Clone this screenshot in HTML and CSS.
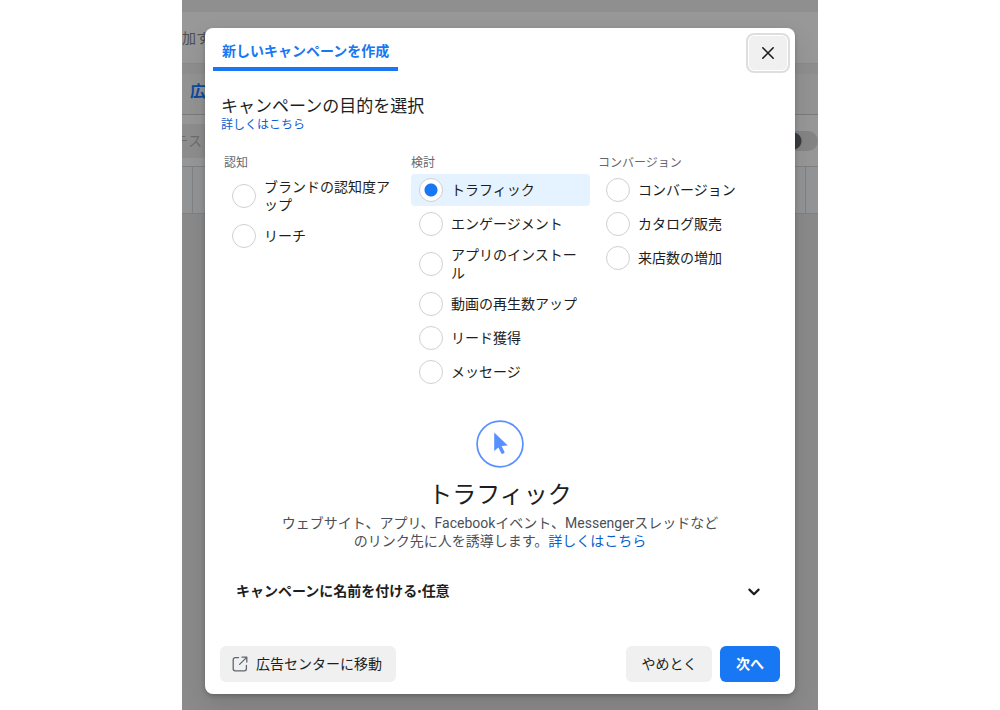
FILE: index.html
```
<!DOCTYPE html>
<html lang="ja">
  <head>
    <meta charset="UTF-8" />
    <meta name="viewport" content="width=device-width, initial-scale=1.0" />
    <title>新しいキャンペーンを作成</title>
    <link rel="stylesheet" href="styles.css">
  </head>
  <body>
    <div class="stage">
      <!-- Ads manager behind the dialog -->
      <div class="backdrop" aria-hidden="true">
        <div class="bg-top"></div>
        <div class="bg-notice">加す</div>
        <div class="bg-gap"></div>
        <div class="bg-tabs">広</div>
        <div class="bg-toolbar">
          <span class="bg-search">テス</span>
          <span class="bg-switch"></span>
        </div>
        <div class="bg-table-head"><span class="bg-cell"></span><span class="bg-cell-last"></span></div>
      </div>

      <!-- Dialog -->
      <div class="overlay">
        <form class="modal" role="dialog" aria-labelledby="tab-title">
          <div class="modal-header">
            <div class="tab" id="tab-title">新しいキャンペーンを作成</div>
            <button class="close-btn" type="button" aria-label="閉じる">
              <svg width="14" height="14" viewBox="0 0 14 14" fill="none" stroke="#1c1e21" stroke-width="1.6" stroke-linecap="round">
                <path d="M1.8 1.8l10.4 10.4M12.2 1.8L1.8 12.2" />
              </svg>
            </button>
          </div>

          <div class="modal-body">
            <h1>キャンペーンの目的を選択</h1>
            <a class="more-link" href="#">詳しくはこちら</a>

            <div class="objectives">
              <div class="column">
                <h2>認知</h2>
                <label class="option"><input type="radio" name="objective" /><span>ブランドの認知度アップ</span></label>
                <label class="option"><input type="radio" name="objective" /><span>リーチ</span></label>
              </div>
              <div class="column">
                <h2>検討</h2>
                <label class="option"><input type="radio" name="objective" checked /><span>トラフィック</span></label>
                <label class="option"><input type="radio" name="objective" /><span>エンゲージメント</span></label>
                <label class="option"><input type="radio" name="objective" /><span>アプリのインストール</span></label>
                <label class="option"><input type="radio" name="objective" /><span>動画の再生数アップ</span></label>
                <label class="option"><input type="radio" name="objective" /><span>リード獲得</span></label>
                <label class="option"><input type="radio" name="objective" /><span>メッセージ</span></label>
              </div>
              <div class="column">
                <h2>コンバージョン</h2>
                <label class="option"><input type="radio" name="objective" /><span>コンバージョン</span></label>
                <label class="option"><input type="radio" name="objective" /><span>カタログ販売</span></label>
                <label class="option"><input type="radio" name="objective" /><span>来店数の増加</span></label>
              </div>
            </div>

            <div class="summary">
              <svg width="48" height="48" viewBox="0 0 48 48">
                <circle cx="24" cy="24" r="22.9" fill="none" stroke="#5890ff" stroke-width="1.7" />
                <path d="M18.2 12.6V31l4.2-3.6 2.8 5.8c.3.7.9.9 1.5.6l1.2-.5c.6-.3.8-.9.5-1.5l-2.8-5.9 6.2-.4z" fill="#5890ff" />
              </svg>
              <h3>トラフィック</h3>
              <p>ウェブサイト、アプリ、Facebookイベント、Messengerスレッドなどのリンク先に人を誘導します。<a href="#">詳しくはこちら</a></p>
            </div>

            <button class="name-toggle" type="button" aria-expanded="false">
              <span>キャンペーンに名前を付ける<span class="dot">•</span>任意</span>
              <svg width="14" height="10" viewBox="0 0 14 10" fill="none" stroke="#1c1e21" stroke-width="2.2" stroke-linecap="round" stroke-linejoin="round">
                <path d="M2.4 2.6L7 7.2l4.6-4.6" />
              </svg>
            </button>
          </div>

          <div class="modal-footer">
            <button class="btn btn-link" type="button">
              <svg width="16" height="16" viewBox="0 0 16 16" fill="none" stroke="#606770" stroke-width="1.3" stroke-linecap="round" stroke-linejoin="round">
                <path d="M6.6 1.6H3.2A2 2 0 0 0 1.2 3.6v9.2a2 2 0 0 0 2 2h9.2a2 2 0 0 0 2-2V9.4M10 1.2h4.8V6M14.4 1.6L7.6 8.4" />
              </svg>
              広告センターに移動
            </button>
            <button class="btn btn-cancel" type="button">やめとく</button>
            <button class="btn btn-primary" type="submit">次へ</button>
          </div>
        </form>
      </div>
    </div>
  </body>
</html>
```
FILE: styles.css
```
/* Global Styles */
* {
  margin: 0;
  padding: 0;
  box-sizing: border-box;
}

body {
  background-color: #fff;
  color: #1c1e21;
  font-family: Roboto, "Noto Sans CJK JP", sans-serif;
  font-size: 14px;
  line-height: 18px;
}

button {
  font: inherit;
  color: inherit;
  border: none;
  cursor: pointer;
}

a {
  color: #0a5fd0;
  text-decoration: none;
}

a:hover {
  text-decoration: underline;
}

.stage {
  display: grid;
  max-width: 636px;
  min-height: 100vh;
  margin: 0 auto;
  overflow: hidden;
}

.backdrop,
.overlay {
  grid-area: 1 / 1;
}

/* Dimmed page */
.backdrop {
  background-color: #8a8b8a;
  color: #4c4e50;
}

.bg-top {
  height: 12px;
  background-color: #8f8f8f;
}

.bg-notice {
  height: 52px;
  line-height: 52px;
  background-color: #989898;
  border-bottom: 1px solid #8b8b8b;
}

.bg-gap {
  height: 10px;
  background-color: #8f8f8f;
}

.bg-tabs {
  height: 41px;
  padding-left: 8px;
  line-height: 36px;
  font-size: 16px;
  font-weight: 700;
  color: #0f4a9e;
  background-color: #949494;
  border-bottom: 1px solid #7c7c7c;
}

.bg-toolbar {
  display: flex;
  justify-content: space-between;
  align-items: center;
  height: 52px;
  background-color: #989898;
  border-bottom: 1px solid #808284;
}

.bg-search {
  width: 120px;
  height: 34px;
  line-height: 34px;
  text-indent: -8px;
  color: #6c6e70;
  background-color: #8e8e8e;
}

.bg-switch {
  width: 36px;
  height: 20px;
  border-radius: 10px;
  background: radial-gradient(circle at 11px 10px, #3a3e44 8px, #858585 9px);
}

.bg-table-head {
  display: flex;
  justify-content: space-between;
  height: 47px;
  background-color: #939597;
  border-bottom: 1px solid #808284;
}

.bg-cell {
  width: 11px;
  border-right: 1px solid #808284;
}

.bg-cell-last {
  width: 13px;
  border-left: 1px solid #808284;
}

/* Modal */
.overlay {
  display: flex;
  align-items: flex-start;
  padding: 28px 23px 17px;
}

.modal {
  width: 100%;
  background-color: #fff;
  border-radius: 8px;
  box-shadow: 0 12px 28px rgba(0, 0, 0, 0.12), 0 2px 4px rgba(0, 0, 0, 0.2);
}

.modal-header {
  display: flex;
  justify-content: space-between;
  align-items: flex-start;
  height: 45px;
  padding: 0 5px 0 8px;
}

.tab {
  height: 43px;
  padding: 14px 9px 0;
  font-weight: 700;
  color: #1877f2;
  border-bottom: 4px solid #1877f2;
}

.close-btn {
  display: flex;
  align-items: center;
  justify-content: center;
  width: 44px;
  height: 40px;
  margin-top: 5px;
  background-color: #f0f0f0;
  border: 2px solid #dedede;
  border-radius: 8px;
  box-shadow: inset 0 0 0 1px #fff;
}

.modal-body {
  padding: 21px 16px 0;
}

h1 {
  font-size: 17px;
  font-weight: 400;
  line-height: 24px;
}

.more-link {
  display: block;
  font-size: 12px;
  line-height: 14px;
}

/* Objectives */
.objectives {
  display: grid;
  grid-template-columns: repeat(3, 1fr);
  gap: 8px;
  margin: 23px 2px 0 3px;
}

.column {
  display: flex;
  flex-direction: column;
  gap: 2px;
}

.column h2 {
  margin-bottom: 1px;
  font-size: 12px;
  font-weight: 400;
  line-height: 16px;
  color: #65676b;
}

.option {
  display: flex;
  align-items: center;
  gap: 8px;
  min-height: 32px;
  padding: 4px 8px;
  border-radius: 4px;
  cursor: pointer;
}

.option:has(input:checked) {
  background-color: #e5f2ff;
}

.option input {
  appearance: none;
  flex-shrink: 0;
  width: 24px;
  height: 24px;
  background-color: #fff;
  border: 1px solid #d0d0d0;
  border-radius: 50%;
}

.option input:checked {
  background: radial-gradient(circle, #1877f2 6px, #fff 7px);
}

/* Selected objective */
.summary {
  display: flex;
  flex-direction: column;
  align-items: center;
  margin-top: 32px;
  text-align: center;
}

.summary h3 {
  margin: 11px 0 3px;
  font-size: 24px;
  font-weight: 400;
  line-height: 32px;
}

.summary p {
  max-width: 448px;
  color: #4b4f56;
}

.name-toggle {
  display: flex;
  justify-content: space-between;
  align-items: center;
  width: 100%;
  margin-top: 22px;
  padding: 10px 18px 10px 15px;
  font-weight: 700;
  background: none;
}

.dot {
  font-size: 12px;
}

/* Footer */
.modal-footer {
  display: flex;
  align-items: center;
  gap: 8px;
  padding: 35px 15px 12px;
}

.btn {
  height: 36px;
  border-radius: 6px;
  background-color: #f0f0f0;
}

.btn-link {
  display: flex;
  align-items: center;
  gap: 8px;
  margin-right: auto;
  padding: 0 14px 0 12px;
}

.btn-cancel {
  padding: 0 15px;
}

.btn-primary {
  padding: 0 16px;
  font-weight: 700;
  color: #fff;
  background-color: #1877f2;
}
```
